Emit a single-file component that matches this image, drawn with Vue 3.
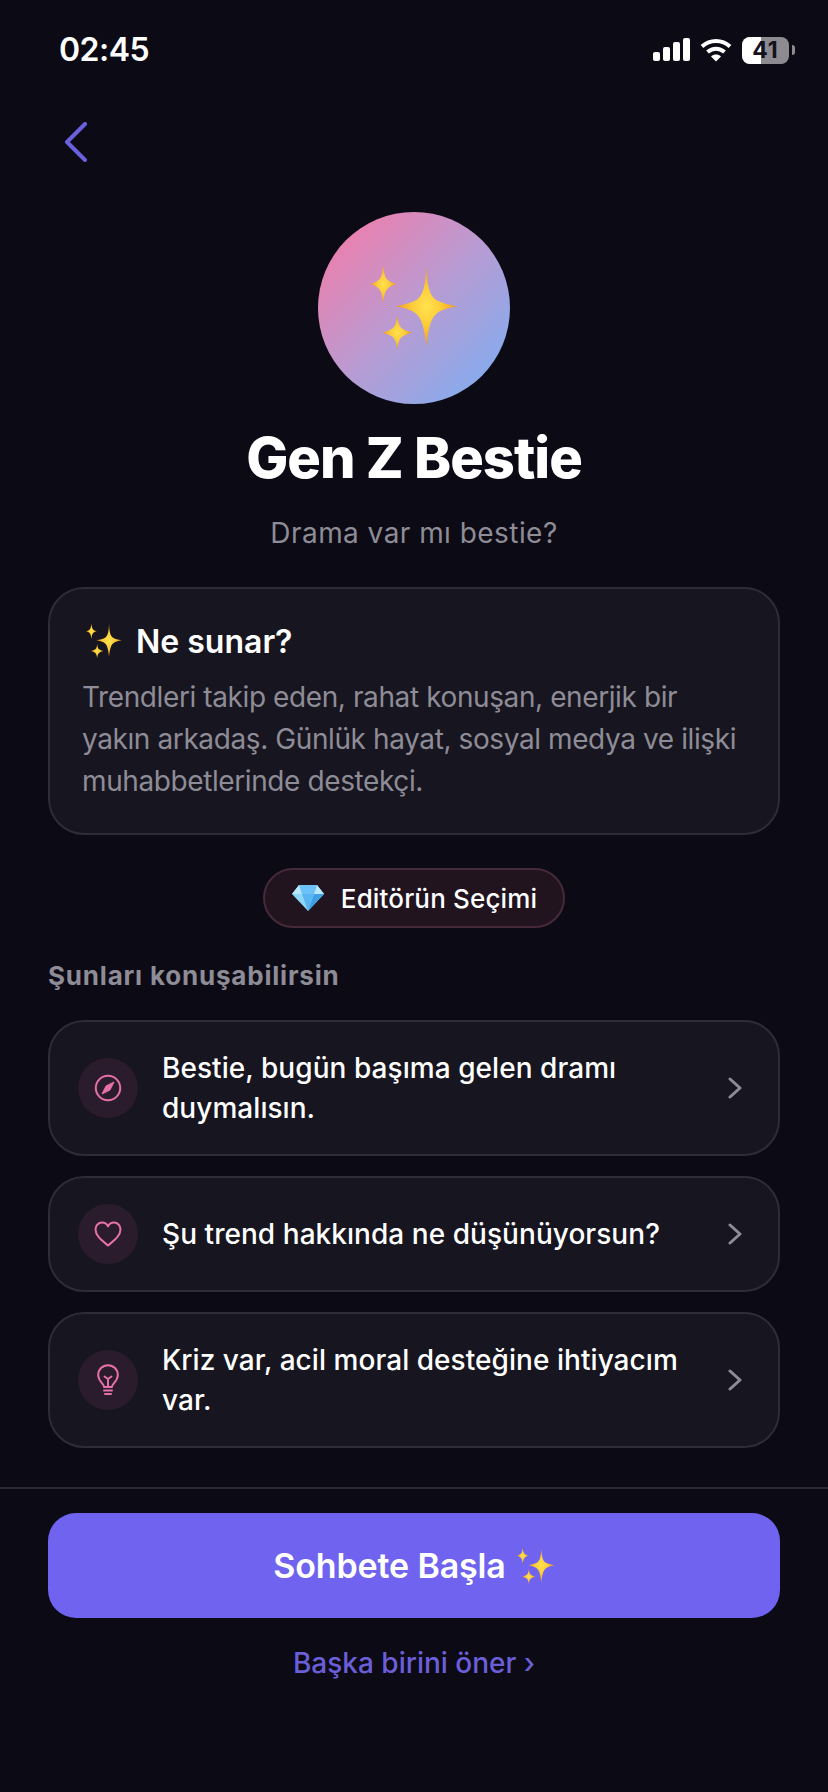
<script setup>
const rows = [
  { icon: 'compass', text: 'Bestie, bugün başıma gelen dramı duymalısın.' },
  { icon: 'heart', text: 'Şu trend hakkında ne düşünüyorsun?' },
  { icon: 'bulb', text: 'Kriz var, acil moral desteğine ihtiyacım var.' },
]
</script>

<template>
  <div class="page">
    <svg class="defs" width="0" height="0" aria-hidden="true">
      <defs>
        <radialGradient id="gold" cx="0.5" cy="0.5" r="0.5">
          <stop offset="0" stop-color="#ffe24f" />
          <stop offset="0.5" stop-color="#fccb36" />
          <stop offset="1" stop-color="#ee9420" />
        </radialGradient>
        <symbol id="sparkles" viewBox="0 0 100 100">
          <path fill="url(#gold)" d="M64 2C65 24 67 34 74 40C80 44 89 46 99 48C89 50 80 52 75 57C69 62 66 74 64 94C62 74 59 62 53 57C48 52 39 50 29 48C39 46 48 44 54 40C61 34 63 24 64 2Z" />
          <path fill="url(#gold)" d="M15 1C16 11 17 15 20 18C23 21 26 22 30 23C26 24 23 25 20 28C17 31 16 36 15 45C14 36 13 31 10 28C7 25 4 24 0 23C4 22 7 21 10 18C13 15 14 11 15 1Z" />
          <path fill="url(#gold)" d="M31 58C32 66 33 70 36 73C39 75 43 77 48 78C43 79 39 81 36 83C33 86 32 90 31 98C30 90 29 86 26 83C23 81 19 79 14 78C19 77 23 75 26 73C29 70 30 66 31 58Z" />
        </symbol>
      </defs>
    </svg>

    <header class="status">
      <span class="time">02:45</span>
      <div class="status-icons">
        <svg class="signal" width="37" height="24" viewBox="0 0 37 24" fill="#fff">
          <rect x="0" y="14" width="7" height="9" rx="2" />
          <rect x="10" y="9" width="7" height="14" rx="2" />
          <rect x="20" y="4" width="7" height="19" rx="2" />
          <rect x="30" y="0" width="7" height="23" rx="2" />
        </svg>
        <svg class="wifi" width="32" height="24" viewBox="0 0 32 24" fill="none" stroke="#fff" stroke-width="4">
          <path d="M2 8.5C10 1 22 1 30 8.5" />
          <path d="M7.5 14C12.5 9.5 19.5 9.5 24.5 14" />
          <path d="M16 23.5L11 18.4C14 16 18 16 21 18.4Z" fill="#fff" stroke="none" />
        </svg>
        <div class="battery">
          <span class="battery-fill"></span>
          <span class="battery-num">41</span>
        </div>
        <span class="battery-nub"></span>
      </div>
    </header>

    <svg class="back" width="24" height="40" viewBox="0 0 24 40" fill="none" stroke="#6a5fdc" stroke-width="4" stroke-linecap="round" stroke-linejoin="round">
      <path d="M21 2L3 20L21 38" />
    </svg>

    <section class="hero">
      <div class="avatar">
        <svg width="88" height="88"><use href="#sparkles" /></svg>
      </div>
      <h1 class="title">Gen Z Bestie</h1>
      <p class="subtitle">Drama var mı bestie?</p>
    </section>

    <section class="card">
      <div class="card-head">
        <svg width="36" height="36"><use href="#sparkles" /></svg>
        <span>Ne sunar?</span>
      </div>
      <p class="card-body">Trendleri takip eden, rahat konuşan, enerjik bir yakın arkadaş. Günlük hayat, sosyal medya ve ilişki muhabbetlerinde destekçi.</p>
    </section>

    <div class="badge-wrap">
      <div class="badge">
        <svg width="34" height="28" viewBox="0 0 34 28">
          <path fill="#8fd6fb" d="M8 1H26L33 10L17 27L1 10Z" />
          <path fill="#5ab6f3" d="M11 10H23L17 27Z" />
          <path fill="#b9e8fd" d="M8 1L11 10H1Z" />
          <path fill="#b9e8fd" d="M26 1L33 10H23Z" />
          <path fill="#6cc2f6" d="M8 1H26L23 10H11Z" />
          <path fill="#3f9fe6" d="M23 10H33L17 27Z" />
        </svg>
        <span>Editörün Seçimi</span>
      </div>
    </div>

    <h2 class="label">Şunları konuşabilirsin</h2>

    <div class="rows">
      <button v-for="row in rows" :key="row.icon" class="row" type="button">
        <span class="row-icon">
          <svg v-if="row.icon === 'compass'" width="28" height="28" viewBox="0 0 28 28" fill="none" stroke="#e670a9" stroke-width="2">
            <circle cx="14" cy="14" r="12.2" />
            <path d="M20 8L16 16L8 20L12 12Z" fill="#e670a9" stroke-linejoin="round" stroke-width="1" />
          </svg>
          <svg v-else-if="row.icon === 'heart'" width="28" height="26" viewBox="0 0 28 26" fill="none" stroke="#e670a9" stroke-width="2" stroke-linejoin="round">
            <path d="M14 24.5C8 19.5 1.5 15 1.5 8.5C1.5 4.5 4.5 1.6 8 1.6C10.6 1.6 12.8 3 14 5.4C15.2 3 17.4 1.6 20 1.6C23.5 1.6 26.5 4.5 26.5 8.5C26.5 15 20 19.5 14 24.5Z" />
          </svg>
          <svg v-else width="22" height="32" viewBox="0 0 22 32" fill="none" stroke="#e670a9" stroke-width="2" stroke-linecap="round" stroke-linejoin="round">
            <path d="M7 23C7 19.5 1.2 17.5 1.2 11C1.2 5.5 5.5 1.2 11 1.2C16.5 1.2 20.8 5.5 20.8 11C20.8 17.5 15 19.5 15 23Z" />
            <path d="M7.5 12.5L11 15L14.5 12.5M11 15V23" />
            <path d="M7 26.5H15M8 30H14" />
          </svg>
        </span>
        <span class="row-text">{{ row.text }}</span>
        <svg class="row-chevron" width="14" height="22" viewBox="0 0 14 22" fill="none" stroke="#8e8c96" stroke-width="3" stroke-linecap="round" stroke-linejoin="round">
          <path d="M2 2L12 11L2 20" />
        </svg>
      </button>
    </div>

    <footer class="footer">
      <button class="cta" type="button">
        <span>Sohbete Başla</span>
        <svg width="38" height="38"><use href="#sparkles" /></svg>
      </button>
      <a class="link">Başka birini öner ›</a>
    </footer>
  </div>
</template>

<style>
html, body { margin: 0; background: #0c0a14; }
</style>

<style scoped>
.page {
  width: 828px;
  height: 1792px;
  overflow: hidden;
  background: #0c0a14;
  color: #fff;
  font-family: Inter, "Noto Sans", sans-serif;
  display: flex;
  flex-direction: column;
}
.defs { display: block; }
.status {
  height: 100px;
  box-sizing: border-box;
  padding: 31px 33px 0 59px;
  display: flex;
  justify-content: space-between;
  align-items: flex-start;
}
.time { font-size: 32px; font-weight: 600; line-height: 38px; letter-spacing: -0.5px; }
.status-icons { display: flex; align-items: center; gap: 10px; height: 38px; }
.battery {
  width: 47px;
  height: 27px;
  border-radius: 8px;
  background: #8d8b90;
  overflow: hidden;
  display: flex;
  align-items: center;
  justify-content: center;
  position: relative;
}
.battery-fill { position: absolute; left: 0; top: 0; bottom: 0; width: 19px; background: #fff; }
.battery-num { position: relative; font-size: 23px; font-weight: 700; letter-spacing: 1px; color: #14121c; line-height: 1; }
.battery-nub { width: 3px; height: 10px; background: #8d8b90; border-radius: 0 3px 3px 0; margin-left: -7px; }
.back { display: block; margin: 22px 0 0 64px; }
.hero { display: flex; flex-direction: column; align-items: center; margin-top: 50px; }
.avatar {
  width: 192px;
  height: 192px;
  border-radius: 50%;
  background: linear-gradient(135deg, #f47ba8 5%, #b99bd2 50%, #7eaef2 95%);
  display: flex;
  align-items: center;
  justify-content: center;
}
.title { margin: 20px 0 0; font-size: 56px; line-height: 68px; font-weight: 800; letter-spacing: -1px; }
.subtitle { margin: 21px 0 0; font-size: 28px; line-height: 40px; letter-spacing: 0.45px; color: #8e8c96; }
.card {
  margin: 34px 48px 0;
  box-sizing: border-box;
  height: 248px;
  padding: 30px 32px 0;
  border: 2px solid #2e2d37;
  border-radius: 36px;
  background: #17151f;
}
.card-head { display: flex; align-items: center; gap: 14px; height: 44px; padding-left: 4px; font-size: 32px; font-weight: 600; }
.card-body { margin: 13px 0 0; font-size: 28px; line-height: 42px; letter-spacing: -0.4px; color: #8e8c96; }
.badge-wrap { display: flex; justify-content: center; margin-top: 33px; }
.badge {
  height: 60px;
  box-sizing: border-box;
  padding: 0 26px;
  display: flex;
  align-items: center;
  gap: 16px;
  border: 2px solid #472a3a;
  border-radius: 30px;
  background: #21141f;
  font-size: 26px;
  font-weight: 500;
  letter-spacing: 0.15px;
}
.label { margin: 30px 0 0 48px; font-size: 26px; line-height: 36px; font-weight: 700; letter-spacing: 0.8px; color: #8e8c96; }
.rows { margin: 26px 48px 0; display: flex; flex-direction: column; gap: 20px; }
.row {
  box-sizing: border-box;
  min-height: 116px;
  padding: 26px 36px 26px 28px;
  display: flex;
  align-items: center;
  gap: 24px;
  border: 2px solid #2e2d37;
  border-radius: 36px;
  background: #17151f;
  color: #fff;
  font: inherit;
  text-align: left;
}
.row-icon {
  flex: none;
  width: 60px;
  height: 60px;
  border-radius: 50%;
  background: #2a1c2c;
  display: flex;
  align-items: center;
  justify-content: center;
}
.row-text { flex: 1; font-size: 28px; line-height: 40px; font-weight: 500; letter-spacing: 0.05px; }
.row-chevron { flex: none; }
.footer {
  margin-top: 39px;
  border-top: 2px solid #2a2933;
  padding: 24px 48px 0;
  display: flex;
  flex-direction: column;
  align-items: center;
}
.cta {
  width: 100%;
  height: 105px;
  border: 0;
  border-radius: 28px;
  background: #6f63ef;
  color: #fff;
  font: inherit;
  font-size: 34px;
  font-weight: 600;
  letter-spacing: -0.15px;
  display: flex;
  align-items: center;
  justify-content: center;
  gap: 11px;
}
.link { margin-top: 25px; font-size: 28px; line-height: 40px; font-weight: 500; color: #6b5fd9; }
</style>
